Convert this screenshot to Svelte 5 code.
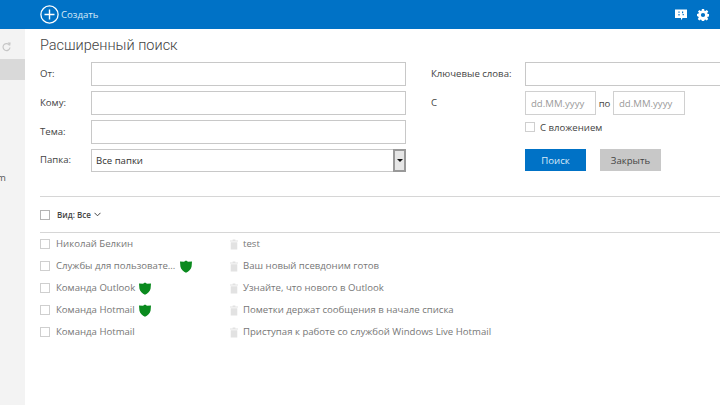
<script>
	const leftFields = [
		{ label: 'От:' },
		{ label: 'Кому:' },
		{ label: 'Тема:' }
	];

	const messages = [
		{ from: 'Николай Белкин', shield: false, wide: false, subject: 'test' },
		{ from: 'Службы для пользовате...', shield: true, wide: true, subject: 'Ваш новый псевдоним готов' },
		{ from: 'Команда Outlook', shield: true, wide: false, subject: 'Узнайте, что нового в Outlook' },
		{ from: 'Команда Hotmail', shield: true, wide: false, subject: 'Пометки держат сообщения в начале списка' },
		{ from: 'Команда Hotmail', shield: false, wide: false, subject: 'Приступая к работе со службой Windows Live Hotmail' }
	];
</script>

<div class="page">
	<header class="topbar">
		<div class="create">
			<svg width="19" height="19" viewBox="0 0 19 19" fill="none" stroke="#fff">
				<circle cx="9.5" cy="9.5" r="8.6" stroke-width="1.3" />
				<path d="M9.5 4.5v10M4.5 9.5h10" stroke-width="1.4" />
			</svg>
			<span>Создать</span>
		</div>
		<div class="top-icons">
			<svg width="12" height="12" viewBox="0 0 12 12">
				<path fill="#fff" d="M0 0.5h12v8.5H7.6L6 11.2V9H0z" />
				<path fill="#0072c6" d="M3.4 2.6h1.2v1.2H3.4zM3.4 5h1.2v1.6H3.4zM7 2.6h1.2v1.6H7zM7.6 5h1.2v1.2H7.6z" />
			</svg>
			<svg width="12" height="12" viewBox="0 0 13 13">
				<path fill="#fff" fill-rule="evenodd" d="M5.3 0h2.4l.3 1.8 1 .4L10.500 1.100l1.700 1.700-1.100 1.500.4 1 1.900.3v2.400l-1.900.3-.4 1 1.100 1.500-1.700 1.700-1.500-1.100-1 .4-.3 1.900H5.300l-.3-1.900-1-.4-1.500 1.100-1.700-1.700 1.100-1.500-.4-1L0 7.700V5.300l1.700-.3.400-1L1 2.800 2.700 1.100l1.300 1.100 1-.4zM6.500 4.200a2.300 2.300 0 1 0 0 4.600 2.300 2.300 0 0 0 0-4.600z" />
			</svg>
		</div>
	</header>

	<div class="body">
		<aside class="sidebar">
			<div class="refresh">
				<svg width="9" height="10" viewBox="0 0 9 10" fill="none" stroke="#c6c6c6" stroke-width="1.2">
					<path d="M7.600 3.400A3.500 3.500 0 1 0 8 5.500" />
					<path fill="#c6c6c6" stroke="none" d="M5.600 0.400 8.600 0.600 8.200 3.800z" />
				</svg>
			</div>
			<div class="folder-active"></div>
			<div class="folder-tail">m</div>
		</aside>

		<main class="content">
			<h1>Расширенный поиск</h1>

			<div class="search">
				<div class="col-left">
					{#each leftFields as f}
						<label class="field">
							<span class="lbl">{f.label}</span>
							<input class="text" type="text" />
						</label>
					{/each}
					<div class="field folder">
						<span class="lbl">Папка:</span>
						<div class="select">
							<span>Все папки</span>
							<span class="select-btn"><i></i></span>
						</div>
					</div>
				</div>

				<div class="col-right">
					<label class="rfield">
						<span class="rlbl">Ключевые слова:</span>
						<input class="text keywords" type="text" />
					</label>
					<div class="rfield dates">
						<span class="rlbl">С</span>
						<span class="date">dd.MM.yyyy</span>
						<span class="po">по</span>
						<span class="date">dd.MM.yyyy</span>
					</div>
					<div class="attach">
						<span class="box"></span>
						<span>С вложением</span>
					</div>
					<div class="buttons">
						<button class="primary">Поиск</button>
						<button class="secondary">Закрыть</button>
					</div>
				</div>
			</div>

			<div class="toolbar">
				<span class="box dark"></span>
				<span class="view">Вид: Все</span>
				<svg width="7" height="5" viewBox="0 0 7 5" fill="none" stroke="#444" stroke-width="1"><path d="M0.500 0.800 3.500 3.800 6.500 0.800" /></svg>
			</div>

			<ul class="list">
				{#each messages as m}
					<li>
						<span class="box"></span>
						<span class="from" class:wide={m.wide}>
							<span class="from-name">{m.from}</span>
							{#if m.shield}
								<svg class="shield" width="12" height="13" viewBox="0 0 12 13">
									<path fill="#0a8a1e" d="M6 0.500 8 1.800 12 1.500 11.600 6.500C11.200 9.500 8.500 11.500 6 12.800 3.500 11.500.8 9.500.4 6.500L0 1.500 4 1.800z" />
								</svg>
							{/if}
						</span>
						<svg class="trash" width="8" height="11" viewBox="0 0 9 11">
							<path fill="#e2e2e2" d="M3 0h3v1h3v1.200H0V1h3zM.8 3h7.400v8H.8z" />
						</svg>
						<span class="subject">{m.subject}</span>
					</li>
				{/each}
			</ul>
		</main>
	</div>
</div>

<style>
	:global(body) {
		margin: 0;
		background: #fff;
		overflow: hidden;
	}

	.page {
		width: 720px;
		height: 405px;
		overflow: hidden;
		font-family: 'Open Sans', 'Liberation Sans', sans-serif;
		font-size: 9.6px;
		color: #444;
		display: flex;
		flex-direction: column;
	}

	.topbar {
		height: 29px;
		flex: none;
		background: #0072c6;
		display: flex;
		align-items: center;
		justify-content: space-between;
		padding: 0 11px 0 40px;
		color: #fff;
	}

	.create {
		display: flex;
		align-items: center;
		gap: 2px;
		color: #d8eaf8;
	}

	.top-icons {
		display: flex;
		align-items: center;
		gap: 10px;
	}

	.body {
		flex: 1;
		display: flex;
		min-height: 0;
	}

	.sidebar {
		width: 25px;
		flex: none;
		background: #f3f3f3;
		overflow: hidden;
	}

	.refresh {
		height: 30px;
		padding: 13px 0 0 2px;
		box-sizing: border-box;
	}

	.folder-active {
		height: 21px;
		background: #d9d9d9;
	}

	.folder-tail {
		margin-top: 91px;
		line-height: 14px;
		color: #555;
		margin-left: -3px;
	}

	.content {
		flex: 1;
		padding-left: 15px;
		min-width: 0;
	}

	h1 {
		margin: 0;
		height: 33px;
		padding-top: 7px;
		box-sizing: border-box;
		font-family: Roboto, 'Open Sans', sans-serif;
		font-size: 14.5px;
		font-weight: 300;
		line-height: 20px;
		color: #444;
	}

	.search {
		display: flex;
		height: 134px;
		border-bottom: 1px solid #d6d6d6;
	}

	.col-left {
		width: 391px;
		flex: none;
	}

	.field {
		display: flex;
		align-items: center;
		height: 24px;
		margin-bottom: 5px;
	}

	.field.folder {
		height: 23px;
	}

	.lbl {
		width: 51px;
		flex: none;
		padding-bottom: 2px;
	}

	.text {
		width: 315px;
		height: 24px;
		box-sizing: border-box;
		border: 1px solid #c8c8c8;
		background: #fff;
		padding: 0;
		margin: 0;
		outline: none;
	}

	.select {
		width: 315px;
		height: 23px;
		box-sizing: border-box;
		border: 1px solid #c8c8c8;
		display: flex;
		align-items: center;
		justify-content: space-between;
		padding-left: 4px;
		color: #333;
	}

	.select-btn {
		width: 13px;
		height: 23px;
		margin: -1px -1px -1px 0;
		box-sizing: border-box;
		border: 2px solid #999;
		background: #e6e6e6;
		display: flex;
		align-items: center;
		justify-content: center;
	}

	.select-btn i {
		width: 0;
		height: 0;
		border-left: 3px solid transparent;
		border-right: 3px solid transparent;
		border-top: 3px solid #111;
	}

	.col-right {
		flex: 1;
		min-width: 0;
		white-space: nowrap;
	}

	.rfield {
		display: flex;
		align-items: center;
		height: 24px;
		margin-bottom: 5px;
	}

	.rlbl {
		width: 94px;
		flex: none;
		padding-bottom: 2px;
	}

	.keywords {
		width: 220px;
		flex: none;
	}

	.date {
		width: 71px;
		height: 24px;
		box-sizing: border-box;
		border: 1px solid #d0d0d0;
		color: #9a9a9a;
		display: flex;
		align-items: center;
		padding-left: 5px;
	}

	.po {
		width: 17px;
		text-align: center;
	}

	.date:last-child {
		width: 72px;
	}

	.attach {
		display: flex;
		align-items: center;
		gap: 5px;
		height: 14px;
		margin: 0 0 15px 94px;
	}

	.buttons {
		display: flex;
		gap: 14px;
		margin-left: 94px;
	}

	button {
		width: 61px;
		height: 22px;
		border: 0;
		padding: 0;
		font: inherit;
	}

	.primary {
		background: #0072c6;
		color: #d8eaf8;
	}

	.secondary {
		background: #c8c8c8;
		color: #444;
	}

	.box {
		width: 8px;
		height: 8px;
		flex: none;
		border: 1px solid #cfcfcf;
		background: #fff;
	}

	.box.dark {
		border-color: #b4b4b4;
	}

	.toolbar {
		display: flex;
		align-items: center;
		height: 35px;
		border-bottom: 1px solid #d6d6d6;
	}

	.view {
		margin-left: 7px;
		margin-right: 3px;
		font-size: 8px;
		font-weight: 600;
	}

	.list {
		list-style: none;
		margin: 0;
		padding: 0;
	}

	li {
		display: flex;
		align-items: center;
		height: 22px;
		color: #777;
	}

	.from {
		width: 174px;
		flex: none;
		margin-left: 6px;
		display: flex;
		align-items: center;
		gap: 4px;
	}

	.from.wide {
		gap: 5px;
	}

	.from-name,
	.subject {
		padding-bottom: 2px;
	}

	.trash {
		flex: none;
	}

	.subject {
		margin-left: 5px;
	}
</style>
